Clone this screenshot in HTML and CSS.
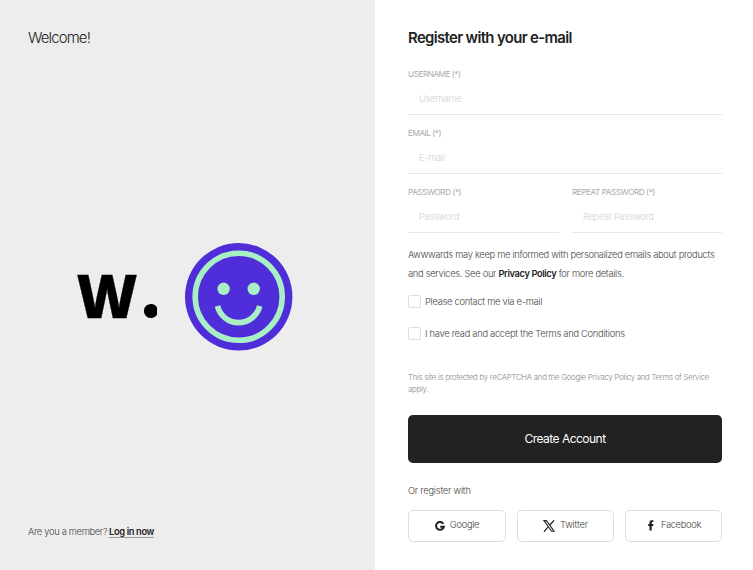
FILE: index.html
```html
<!DOCTYPE html>
<html lang="en">
<head>
<meta charset="utf-8">
<title>Register</title>
<link rel="stylesheet" href="styles.css">
</head>
<body>
<main class="page">
  <section class="intro">
    <h2 class="welcome"><span>Welcome!</span></h2>
    <div class="brand">
      <svg class="logo" viewBox="0 0 80 44" role="img" aria-label="W.">
        <text class="logo-letter" x="-.6" y="42.8" textLength="61" lengthAdjust="spacingAndGlyphs">W</text>
        <path d="M80 32.2V39.8A7.1 7.1 0 1 1 80 32.2Z"/>
      </svg>
      <svg class="smiley" viewBox="0 0 108 108" aria-hidden="true">
        <circle cx="53.7" cy="53.8" r="53.7" fill="#4f2dd8"/>
        <g fill="none" stroke="#a9efc5" stroke-width="5.6">
          <circle cx="53.7" cy="53.8" r="43.5"/>
          <path d="M32.5 63A21.7 21.7 0 0 0 74.7 63"/>
        </g>
        <circle cx="38.6" cy="45.8" r="6.2" fill="#a9efc5"/>
        <circle cx="68.7" cy="45.8" r="6.2" fill="#a9efc5"/>
      </svg>
    </div>
    <p class="member"><span>Are you a member?</span> <a class="login">Log in now</a></p>
  </section>
  <section class="register">
    <h1 class="title"><span>Register with your e-mail</span></h1>
    <form class="form">
      <label class="field"><span class="label">USERNAME (*)</span><input class="input" type="text" placeholder="Username"></label>
      <label class="field"><span class="label">EMAIL (*)</span><input class="input" type="text" placeholder="E-mail"></label>
      <div class="pair">
        <label class="field"><span class="label">PASSWORD (*)</span><input class="input" type="password" placeholder="Password"></label>
        <label class="field"><span class="label">REPEAT PASSWORD (*)</span><input class="input" type="password" placeholder="Repeat Password"></label>
      </div>
      <p class="notice">Awwwards may keep me informed with personalized emails about products<br>and services. See our <strong>Privacy Policy</strong> for more details.</p>
      <label class="check"><input type="checkbox"><span>Please contact me via e-mail</span></label>
      <label class="check"><input type="checkbox"><span>I have read and accept the Terms and Conditions</span></label>
      <p class="captcha">This site is protected by reCAPTCHA and the Google Privacy Policy and Terms of Service<br>apply.</p>
      <button class="submit" type="button">Create Account</button>
    </form>
    <p class="or">Or register with</p>
    <div class="socials">
      <a class="social google">
        <svg width="10" height="11" viewBox="0 0 10 11"><path d="M8.4 2.8A3.95 3.95 0 1 0 8.9 5.7H5.2" fill="none" stroke="#222" stroke-width="2"/></svg>
        <span>Google</span>
      </a>
      <a class="social twitter">
        <svg width="12" height="12" viewBox="0 0 12 12" fill="none" stroke="#222"><path d="M.9.6H3.4L11.1 11.3H8.6Z" stroke-width="1.1"/><path d="M11 .3 6.9 5M5.2 6.9 1 11.7" stroke-width="1.2"/></svg>
        <span>Twitter</span>
      </a>
      <a class="social facebook">
        <svg width="6" height="11" viewBox="0 0 6 11"><path d="M1.5 10.6V5.9H.2V4H1.5V2.7C1.5.8 2.5.2 4 .2H5.4V2H4.5Q3.7 2 3.7 2.8V4H5.4L5.1 5.9H3.7V10.6Z" fill="#222"/></svg>
        <span>Facebook</span>
      </a>
    </div>
  </section>
</main>
</body>
</html>
```
FILE: styles.css
```css
* { box-sizing: border-box; }
body { margin: 0; font-family: Inter, "Liberation Sans", sans-serif; font-weight: 300; color: #222; background: #fff; }
h1, h2, p { margin: 0; }
.page { display: grid; grid-template-columns: 375px minmax(0, 1fr); height: 570px; }
.intro { background: #ededed; padding: 27px 28px 28px; display: flex; flex-direction: column; justify-content: space-between; }
.welcome { font-size: 14.9px; line-height: 22px; font-weight: 300; letter-spacing: -.84px; }
.brand { display: flex; align-items: center; gap: 28px; margin-left: 49px; margin-top: 22px; }
.logo { width: 80px; height: 44px; overflow: visible; }
.logo-letter { font-family: "Open Sans", sans-serif; font-weight: 800; font-size: 60px; fill: #000; stroke: #000; stroke-width: .3px; }
.smiley { width: 108px; height: 108px; }
.member { font-size: 9.3px; line-height: 20px; color: #444; letter-spacing: -.3px; white-space: nowrap; }
.login { font-weight: 600; color: #222; border-bottom: 1px solid #999; letter-spacing: -.36px; margin-left: -.5px; }
.register { padding: 27px 31px 0 33px; }
.title { font-size: 14.9px; line-height: 22px; font-weight: 600; letter-spacing: -.64px; }
.form { padding-top: 18px; }
.field { display: block; height: 59px; }
.label { display: block; font-size: 8.2px; line-height: 15px; font-weight: 400; color: #aaa; letter-spacing: -.46px; white-space: nowrap; }
.input { display: block; width: 100%; height: 33px; padding: 1px 11px 0; border: 0; border-bottom: 1px solid #e8e8e8; font: 300 9.3px Inter, sans-serif; letter-spacing: -.28px; outline: 0; }
.input::placeholder { color: #d2d2d2; opacity: 1; }
.pair { display: grid; grid-template-columns: 151px 150px; gap: 13px; }
.notice { font-size: 9.3px; line-height: 19px; color: #444; letter-spacing: -.28px; white-space: nowrap; margin-top: 1px; }
.notice strong { font-weight: 600; color: #222; letter-spacing: -.38px; }
.check { display: flex; align-items: center; gap: 4px; height: 13px; margin-top: 19px; font-size: 9.3px; color: #444; letter-spacing: -.26px; }
.notice + .check { margin-top: 12px; }
.check input { appearance: none; margin: 0; width: 13px; height: 13px; border: 1px solid #ddd; border-radius: 2px; }
.captcha { font-size: 7.8px; line-height: 12px; color: #888; letter-spacing: -.25px; white-space: nowrap; margin-top: 31px; }
.submit { display: block; width: 314px; height: 48px; margin-top: 20px; padding: 0 0 2px; border: 0; border-radius: 5px; background: #222; color: #fff; font: 400 12px Inter, sans-serif; letter-spacing: -.52px; }
.or { font-size: 9.3px; line-height: 18px; color: #444; letter-spacing: -.22px; margin-top: 19px; }
.socials { display: grid; grid-template-columns: 98px 97px 97px; gap: 11px; margin-top: 10px; }
.social { display: flex; align-items: center; justify-content: center; gap: 5px; height: 32px; border: 1px solid #ddd; border-radius: 5px; font-size: 9.3px; color: #444; letter-spacing: -.3px; }
.social span { margin-top: -3px; }
.twitter { letter-spacing: -.15px; }
.facebook { gap: 7px; padding-left: 2px; }
.facebook svg { margin-top: -1px; }
```
